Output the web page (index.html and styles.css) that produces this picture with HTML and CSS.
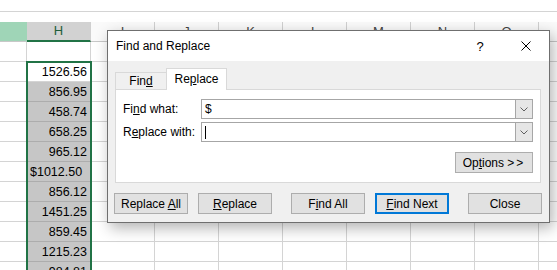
FILE: index.html
```html
<!DOCTYPE html>
<html lang="en">
<head>
    <meta charset="UTF-8">
    <title>Find and Replace</title>
    <link rel="stylesheet" href="styles.css">
</head>
<body>
    <div class="sheet">
        <div class="formula-bar"></div>
        <div class="gap-strip"></div>

        <div class="row head">
            <div class="cell g"></div>
            <div class="cell h">H</div>
            <div class="cell">I</div>
            <div class="cell">J</div>
            <div class="cell">K</div>
            <div class="cell">L</div>
            <div class="cell">M</div>
            <div class="cell">N</div>
            <div class="cell">O</div>
            <div class="cell"></div>
        </div>

        <div class="row"><div class="cell g"></div><div class="cell"></div><div class="cell"></div><div class="cell"></div><div class="cell"></div><div class="cell"></div><div class="cell"></div><div class="cell"></div><div class="cell"></div><div class="cell"></div></div>
        <div class="row"><div class="cell g"></div><div class="cell active">1526.56</div><div class="cell"></div><div class="cell"></div><div class="cell"></div><div class="cell"></div><div class="cell"></div><div class="cell"></div><div class="cell"></div><div class="cell"></div></div>
        <div class="row"><div class="cell g"></div><div class="cell pick">856.95</div><div class="cell"></div><div class="cell"></div><div class="cell"></div><div class="cell"></div><div class="cell"></div><div class="cell"></div><div class="cell"></div><div class="cell"></div></div>
        <div class="row"><div class="cell g"></div><div class="cell pick">458.74</div><div class="cell"></div><div class="cell"></div><div class="cell"></div><div class="cell"></div><div class="cell"></div><div class="cell"></div><div class="cell"></div><div class="cell"></div></div>
        <div class="row"><div class="cell g"></div><div class="cell pick">658.25</div><div class="cell"></div><div class="cell"></div><div class="cell"></div><div class="cell"></div><div class="cell"></div><div class="cell"></div><div class="cell"></div><div class="cell"></div></div>
        <div class="row"><div class="cell g"></div><div class="cell pick">965.12</div><div class="cell"></div><div class="cell"></div><div class="cell"></div><div class="cell"></div><div class="cell"></div><div class="cell"></div><div class="cell"></div><div class="cell"></div></div>
        <div class="row"><div class="cell g"></div><div class="cell pick text">$1012.50</div><div class="cell"></div><div class="cell"></div><div class="cell"></div><div class="cell"></div><div class="cell"></div><div class="cell"></div><div class="cell"></div><div class="cell"></div></div>
        <div class="row"><div class="cell g"></div><div class="cell pick">856.12</div><div class="cell"></div><div class="cell"></div><div class="cell"></div><div class="cell"></div><div class="cell"></div><div class="cell"></div><div class="cell"></div><div class="cell"></div></div>
        <div class="row"><div class="cell g"></div><div class="cell pick">1451.25</div><div class="cell"></div><div class="cell"></div><div class="cell"></div><div class="cell"></div><div class="cell"></div><div class="cell"></div><div class="cell"></div><div class="cell"></div></div>
        <div class="row"><div class="cell g"></div><div class="cell pick">859.45</div><div class="cell"></div><div class="cell"></div><div class="cell"></div><div class="cell"></div><div class="cell"></div><div class="cell"></div><div class="cell"></div><div class="cell"></div></div>
        <div class="row"><div class="cell g"></div><div class="cell pick">1215.23</div><div class="cell"></div><div class="cell"></div><div class="cell"></div><div class="cell"></div><div class="cell"></div><div class="cell"></div><div class="cell"></div><div class="cell"></div></div>
        <div class="row"><div class="cell g"></div><div class="cell pick">984.81</div><div class="cell"></div><div class="cell"></div><div class="cell"></div><div class="cell"></div><div class="cell"></div><div class="cell"></div><div class="cell"></div><div class="cell"></div></div>

        <div class="selection"></div>
    </div>

    <div class="dialog">
        <div class="titlebar">
            <div class="title">Find and Replace</div>
            <div class="tb-btn">?</div>
            <div class="tb-btn">
                <svg width="10" height="10" viewBox="0 0 10 10">
                    <path d="M0.5 0.5 L9.5 9.5 M9.5 0.5 L0.5 9.5" stroke="#000" stroke-width="1" fill="none"/>
                </svg>
            </div>
        </div>

        <div class="content">
            <div class="tabs">
                <div class="tab find">Fin<u>d</u></div>
                <div class="tab replace">Re<u>p</u>lace</div>
            </div>

            <div class="panel">
                <div class="field">
                    <div class="label">Fi<u>n</u>d what:</div>
                    <div class="combo">
                        <div class="value">$</div>
                        <div class="drop">
                            <svg width="8" height="5" viewBox="0 0 8 5"><polyline points="0.5,0.5 4,4 7.5,0.5" stroke="#606060" fill="none"/></svg>
                        </div>
                    </div>
                </div>
                <div class="field">
                    <div class="label">R<u>e</u>place with:</div>
                    <div class="combo">
                        <div class="value"><span class="caret"></span></div>
                        <div class="drop">
                            <svg width="8" height="5" viewBox="0 0 8 5"><polyline points="0.5,0.5 4,4 7.5,0.5" stroke="#606060" fill="none"/></svg>
                        </div>
                    </div>
                </div>
                <div class="opts-row">
                    <div class="btn options"><span>Op<u>t</u>ions <span class="arrows">&gt;&gt;</span></span></div>
                </div>
            </div>

            <div class="actions">
                <div class="btn"><span>Replace <u>A</u>ll</span></div>
                <div class="btn"><span><u>R</u>eplace</span></div>
                <div class="btn wide-gap"><span>F<u>i</u>nd All</span></div>
                <div class="btn default"><span><u>F</u>ind Next</span></div>
                <div class="btn wide-gap"><span>Close</span></div>
            </div>
        </div>
    </div>
</body>
</html>
```

FILE: styles.css
```css
* {
    box-sizing: border-box;
}

body {
    margin: 0;
    width: 557px;
    height: 270px;
    overflow: hidden;
    position: relative;
    background: #fff;
    font-family: "Liberation Sans", Arial, sans-serif;
}

/* spreadsheet */

.sheet {
    position: relative;
}

.formula-bar {
    height: 12px;
    border-bottom: 1px solid #d4d4d4;
}

.gap-strip {
    height: 10px;
}

.row {
    display: flex;
    height: 20px;
}

.cell {
    flex: 0 0 64px;
    height: 20px;
    border-right: 1px solid #d4d4d4;
    border-bottom: 1px solid #d4d4d4;
    padding: 0 3px;
    font-size: 12.5px;
    line-height: 20px;
    text-align: right;
    color: #000;
    white-space: nowrap;
    overflow: hidden;
}

.cell.g {
    flex-basis: 27px;
}

.head .cell {
    background: #fafafa;
    color: #444;
    text-align: center;
    font-size: 13px;
    border-right-color: #d0d0d0;
    border-bottom-color: #c8c8c8;
}

.head .cell.g {
    background: #9fd5b7;
    border-right-color: #9fd5b7;
}

.head .cell.h {
    background: #d2d2d2;
    color: #1e5e3a;
    border-bottom: 2px solid #217346;
    line-height: 18px;
}

.cell.pick {
    background: #c6c6c6;
    border-bottom-color: #adadad;
}

.cell.text {
    text-align: left;
}

.selection {
    position: absolute;
    left: 26px;
    top: 61px;
    width: 66px;
    height: 240px;
    border: 2px solid #217346;
}

/* dialog */

.dialog {
    position: absolute;
    left: 107px;
    top: 30px;
    width: 443px;
    height: 193px;
    border: 1px solid #6f6f6f;
    background: #f0f0f0;
    box-shadow: 3px 5px 14px rgba(0, 0, 0, 0.3);
    font-size: 12px;
    color: #000;
}

.titlebar {
    height: 30px;
    background: #fff;
    display: flex;
    align-items: center;
    padding-left: 8px;
}

.title {
    flex: 1;
}

.tb-btn {
    width: 46px;
    height: 30px;
    display: flex;
    align-items: center;
    justify-content: center;
    font-size: 13px;
}

.content {
    padding: 7px 7px 0 7px;
}

.tabs {
    display: flex;
    align-items: flex-end;
    height: 21px;
}

.tab {
    border: 1px solid #d9d9d9;
    border-bottom: none;
    text-align: center;
}

.tab.find {
    width: 51px;
    height: 17px;
    border-right: none;
    line-height: 16px;
}

.tab.replace {
    width: 61px;
    height: 22px;
    margin-bottom: -1px;
    background: #fff;
    line-height: 20px;
    position: relative;
    z-index: 1;
}

.panel {
    width: 426px;
    height: 94px;
    border: 1px solid #d9d9d9;
    background: #fff;
    padding: 9px 7px 0 7px;
}

.field {
    display: flex;
    align-items: center;
    height: 20px;
}

.field + .field {
    margin-top: 3px;
}

.label {
    width: 78px;
}

.combo {
    width: 332px;
    height: 20px;
    border: 1px solid #a6a6a6;
    display: flex;
}

.combo .value {
    flex: 1;
    padding-left: 3px;
    line-height: 18px;
    display: flex;
    align-items: center;
}

.caret {
    width: 1px;
    height: 13px;
    background: #000;
}

.combo .drop {
    width: 17px;
    border-left: 1px solid #a6a6a6;
    background: #e6e6e6;
    display: flex;
    align-items: center;
    justify-content: center;
}

.opts-row {
    display: flex;
    justify-content: flex-end;
    margin-top: 10px;
}

.btn {
    width: 74px;
    height: 21px;
    border: 1px solid #adadad;
    background: #e1e1e1;
    display: flex;
    align-items: center;
    justify-content: center;
    white-space: nowrap;
}

.btn.options {
    width: 78px;
}

.arrows {
    letter-spacing: 2px;
}

.btn.default {
    border: 2px solid #0078d7;
}

.actions {
    display: flex;
    gap: 10px;
    margin-top: 10px;
    margin-left: -1px;
}

.actions .wide-gap {
    margin-left: 9px;
}
```
